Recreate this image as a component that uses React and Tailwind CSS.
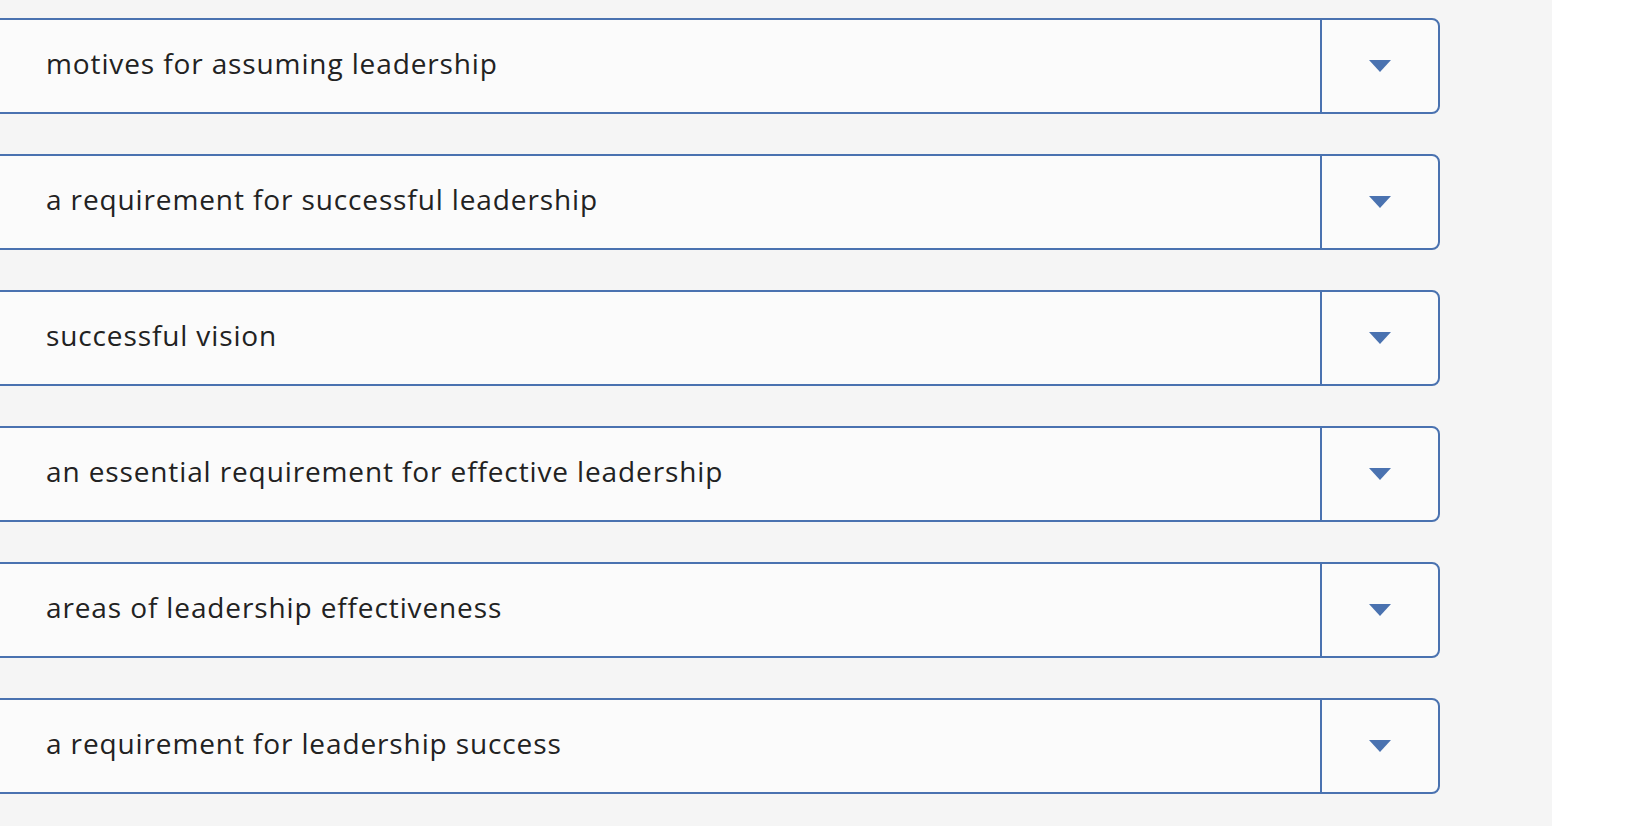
import React from "react";

const rows = [
  "motives for assuming leadership",
  "a requirement for successful leadership",
  "successful vision",
  "an essential requirement for effective leadership",
  "areas of leadership effectiveness",
  "a requirement for leadership success",
];

function Caret() {
  return (
    <svg width="22" height="12" viewBox="0 0 22 12">
      <path d="M0 0 L22 0 L11 12 Z" fill="#4a72b0" />
    </svg>
  );
}

function Row({ label }) {
  return (
    <div className="-ml-[10px] flex h-[96px] w-[1450px] rounded-[8px] border-2 border-[#4a72b0] bg-[#fbfbfb]">
      <div className="flex flex-1 items-center pb-[7px] pl-[54px] text-[28px] tracking-[0.88px] text-[#222222] [font-variant-ligatures:none]">
        {label}
      </div>
      <div className="flex w-[118px] items-center justify-center border-l-2 border-[#4a72b0]">
        <Caret />
      </div>
    </div>
  );
}

export default function App() {
  return (
    <div
      className="flex h-[826px] w-full overflow-hidden bg-white"
      style={{ fontFamily: "'Open Sans', Lato, sans-serif" }}
    >
      <div className="flex w-[1552px] flex-col gap-[40px] bg-[#f5f5f5] pt-[18px]">
        {rows.map((r) => (
          <Row key={r} label={r} />
        ))}
      </div>
      <div className="flex-1" />
    </div>
  );
}
